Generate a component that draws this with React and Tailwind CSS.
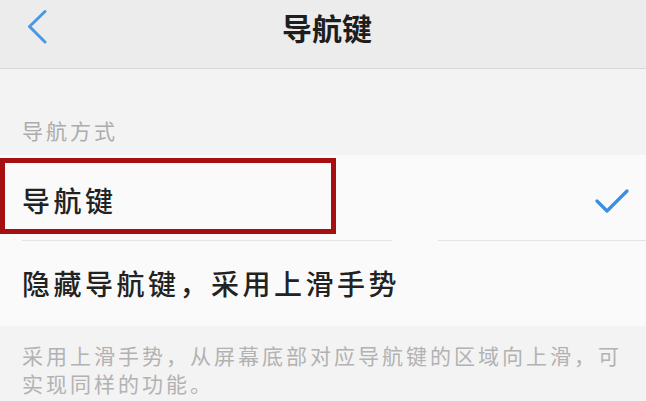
export default function App() {
  const font = { fontFamily: '"Noto Sans CJK SC", "Noto Sans", sans-serif' };
  return (
    <div className="relative w-[646px] h-[401px] overflow-hidden bg-[#f3f3f3]" style={font}>
      {/* Header */}
      <div className="relative h-[69px] bg-[#ececec] border-b border-[#d6d6d6] flex items-center justify-center">
        <svg className="absolute left-[28px] top-[10px]" width="20" height="34" viewBox="0 0 20 34" fill="none">
          <polyline points="17,1.5 1.5,16.5 17,32" stroke="#4a98e6" strokeWidth="3" strokeLinecap="round" strokeLinejoin="round" />
        </svg>
        <span className="text-[30px] leading-none font-bold text-[#1e1e1e] ml-[8px] mb-[14px]">导航键</span>
      </div>

      {/* Section label */}
      <div className="h-[86px] flex items-end pl-[22px] pb-[14px]">
        <span className="text-[21px] leading-none tracking-[3px] text-[#acacac]">导航方式</span>
      </div>

      {/* List */}
      <div className="bg-[#fafafa]">
        <div className="h-[85px] flex items-center justify-between pl-[22px] pr-[17px]">
          <span className="text-[28px] leading-none tracking-[3.5px] font-medium text-[#222] mt-[4px]">导航键</span>
          <svg width="34" height="26" viewBox="0 0 34 26" fill="none" className="mt-[6px]">
            <polyline points="2,13 12,23 32,3" stroke="#3a8ee3" strokeWidth="3.2" strokeLinecap="round" strokeLinejoin="round" />
          </svg>
        </div>
        <div className="flex ml-[22px] h-px">
          <div className="w-[370px] bg-[#e4e4e4]" />
          <div className="w-[46px]" />
          <div className="flex-1 bg-[#e4e4e4]" />
        </div>
        <div className="h-[85px] flex items-center pl-[22px]">
          <span className="text-[28px] leading-none tracking-[3.5px] font-medium text-[#222] mb-[2px]">隐藏导航键，采用上滑手势</span>
        </div>
      </div>

      {/* Footer */}
      <div className="pl-[22px] pr-[10px] pt-[15px]">
        <p className="text-[21px] leading-[28px] tracking-[3px] text-[#b2b2b2]">
          采用上滑手势，从屏幕底部对应导航键的区域向上滑，可<br />实现同样的功能。
        </p>
      </div>

      {/* Annotation box */}
      <div className="absolute left-0 top-[158px] w-[336px] h-[76px] border-[5px] border-[#a50f0f]" />
    </div>
  );
}
